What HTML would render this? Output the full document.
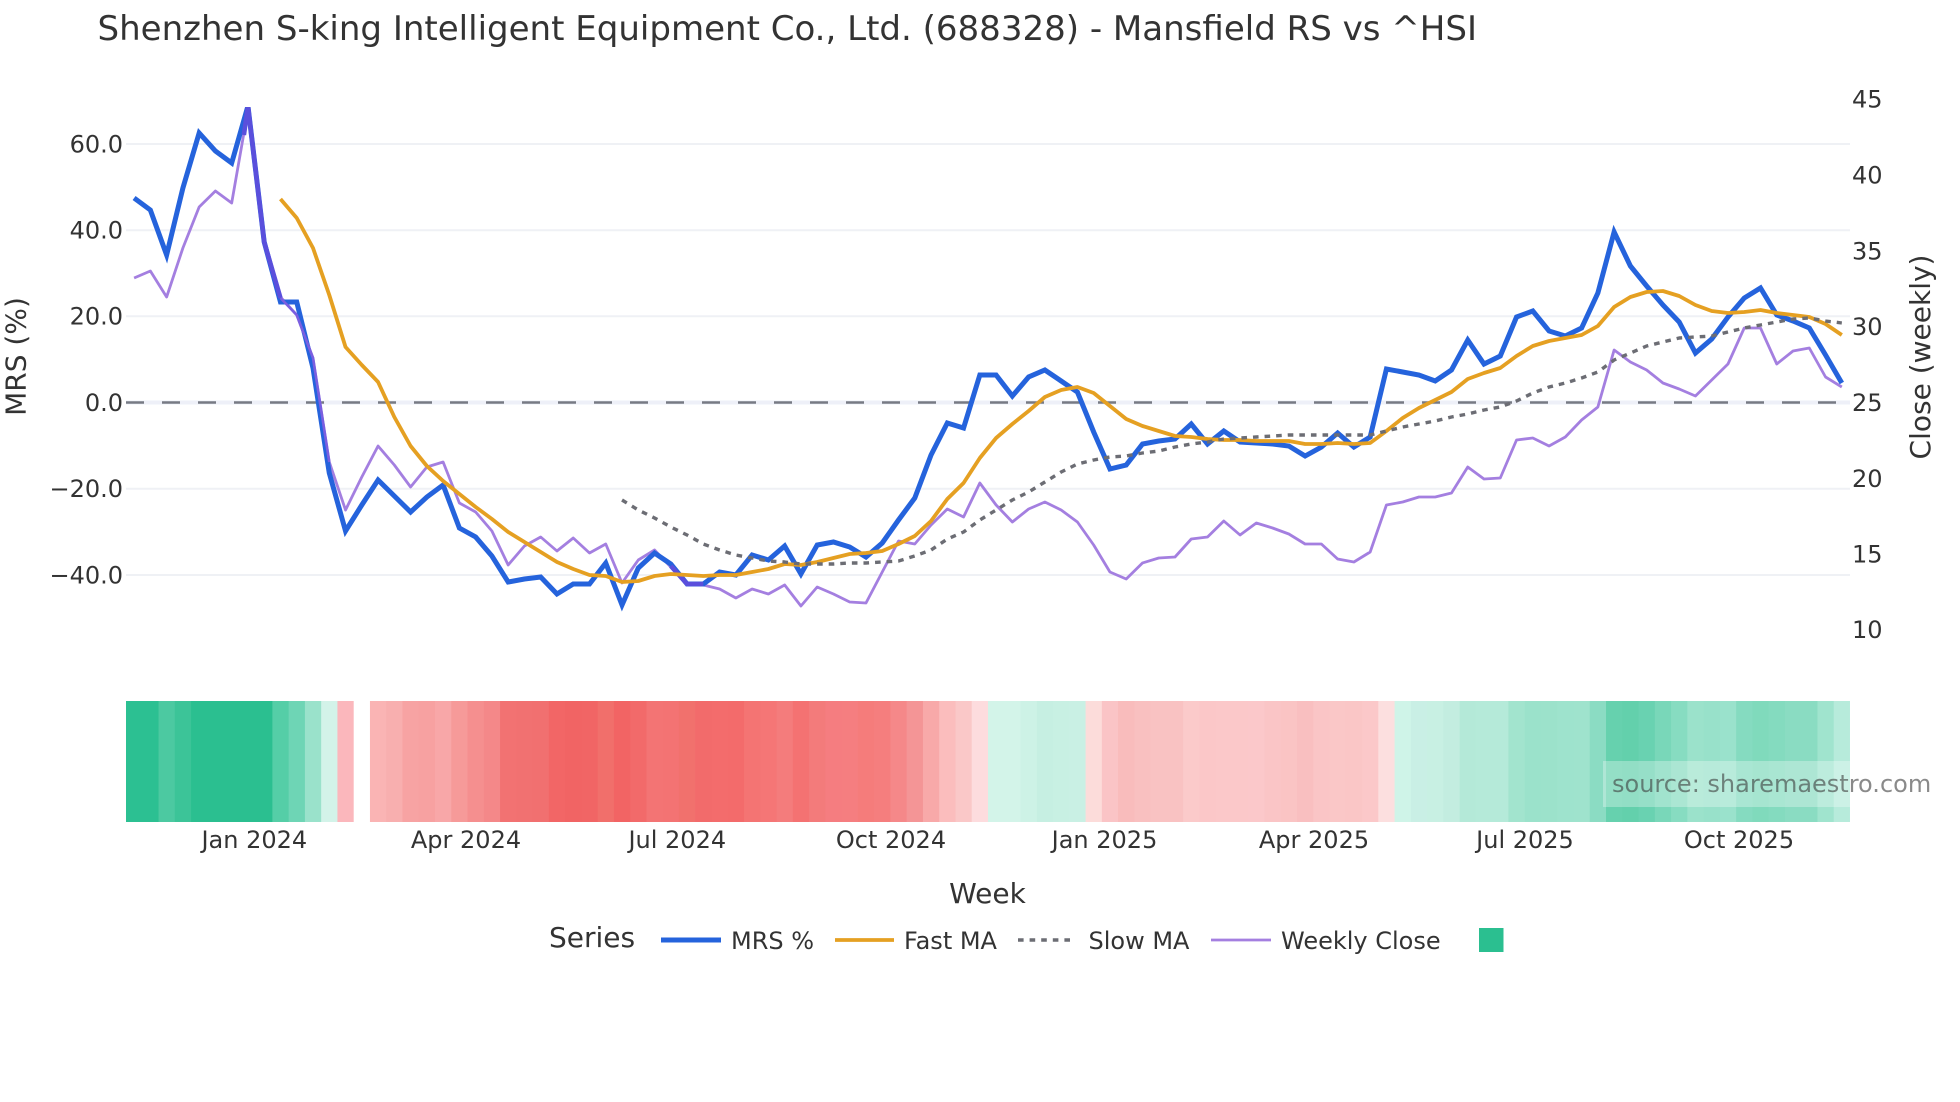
<!DOCTYPE html>
<html>
<head>
<meta charset="utf-8">
<title>Mansfield RS</title>
<style>
html,body{margin:0;padding:0;background:#fff;}
body{width:1960px;height:1102px;overflow:hidden;}
svg{display:block;}
text{font-family:"DejaVu Sans",sans-serif;fill:#333;}
.t{font-size:24px;}
.a{font-size:28px;}
.l{vector-effect:non-scaling-stroke;fill:none;}
</style>
</head>
<body>
<svg width="1960" height="1102" viewBox="0 0 1960 1102" xmlns="http://www.w3.org/2000/svg">
<defs><clipPath id="c"><rect x="126" y="107" width="1724" height="560"/></clipPath></defs>
<rect width="1960" height="1102" fill="#fff"/>

<text x="97.5" y="40" font-size="34.03" style="fill:#333">Shenzhen S-king Intelligent Equipment Co., Ltd. (688328) - Mansfield RS vs ^HSI</text>

<g stroke="#eff1f5" stroke-width="2">
<line x1="126" x2="1850" y1="144" y2="144"/>
<line x1="126" x2="1850" y1="230.2" y2="230.2"/>
<line x1="126" x2="1850" y1="316.3" y2="316.3"/>
<line x1="126" x2="1850" y1="488.7" y2="488.7"/>
<line x1="126" x2="1850" y1="575" y2="575"/>
</g>
<line x1="126" x2="1850" y1="402.5" y2="402.5" stroke="#eef0f8" stroke-width="4"/>
<line x1="126" x2="1850" y1="402.5" y2="402.5" stroke="#777a84" stroke-width="2.6" stroke-dasharray="18 18"/>

<g class="t" text-anchor="end">
<text x="123" y="152.5">60.0</text>
<text x="123" y="238.5">40.0</text>
<text x="123" y="324.5">20.0</text>
<text x="123" y="411">0.0</text>
<text x="123" y="497">−20.0</text>
<text x="123" y="583.5">−40.0</text>
</g>
<g class="t">
<text x="1852" y="107.7">45</text>
<text x="1852" y="183.6">40</text>
<text x="1852" y="259.5">35</text>
<text x="1852" y="335.2">30</text>
<text x="1852" y="411">25</text>
<text x="1852" y="486.8">20</text>
<text x="1852" y="562.6">15</text>
<text x="1852" y="638.2">10</text>
</g>
<text class="a" text-anchor="middle" transform="translate(25.5 356.5) rotate(-90)">MRS (%)</text>
<text class="a" text-anchor="middle" transform="translate(1930 357) rotate(-90)">Close (weekly)</text>

<g clip-path="url(#c)">
<g transform="translate(134.1 0) scale(16.264 1)">
<polyline class="l" stroke="#a47fe0" stroke-width="2.8" stroke-linejoin="round" points="0,278 1,271 2,297 3,248 4,207 5,191 6,203 7,110 8,242 9,297 10,315 11,358 12,462 13,510 14,477 15,446 16,465 17,487 18,467 19,462 20,503 21,512 22,531 23,565 24,546 25,537 26,551 27,538 28,553 29,544 30,583 31,560 32,550 33,567 34,585 35,585 36,589 37,598 38,589 39,594 40,585 41,606 42,587 43,594 44,602 45,603 46,572 47,541 48,544 49,525 50,509 51,517 52,483 53,505 54,522 55,509 56,502 57,510 58,522 59,545 60,572 61,579 62,563 63,558 64,557 65,539 66,537 67,521 68,535 69,523 70,528 71,534 72,544 73,544 74,559 75,562 76,552 77,505 78,502 79,497 80,497 81,493 82,467 83,479 84,478 85,440 86,438 87,446 88,437 89,420 90,407 91,350 92,362 93,370 94,383 95,389 96,396 97,380 98,364 99,328 100,328 101,364 102,351 103,348 104,377 105,387"/>
<polyline class="l" stroke="#2563dc" stroke-width="5" stroke-linejoin="miter" stroke-miterlimit="8" points="0,198 1,210 2,255 3,188 4,133 5,151 6,163 7,106 8,242 9,302 10,302 11,368 12,473 13,531 14,505 15,480 16,496 17,512 18,497 19,485 20,528 21,537 22,556 23,582 24,579 25,577 26,594 27,584 28,584 29,563 30,605 31,568 32,553 33,564 34,584 35,584 36,572 37,575 38,555 39,560 40,546 41,574 42,545 43,542 44,547 45,557 46,543 47,520 48,498 49,455 50,423 51,428 52,375 53,375 54,396 55,377 56,370 57,381 58,392 59,432 60,469 61,465 62,444 63,441 64,439 65,424 66,444 67,431 68,442 69,443 70,444 71,446 72,456 73,447 74,433 75,447 76,437 77,369 78,372 79,375 80,381 81,370 82,340 83,364 84,356 85,317 86,311 87,331 88,336 89,328 90,293 91,232 92,266 93,286 94,305 95,322 96,353 97,339 98,317 99,298 100,288 101,315 102,321 103,328 104,355 105,383"/>
<polyline class="l" stroke="#5a4fdc" stroke-width="4.6" stroke-linejoin="miter" points="6.75,135 7,106 8,242 9,298"/>
<polyline class="l" stroke="#7a5fe0" stroke-width="2.6" stroke-linejoin="round" points="9,298 10,315 11,358 12,462"/>
<polyline class="l" stroke="#5a4fdc" stroke-width="4.6" stroke-linejoin="round" points="33,566 34,584 35,584"/>
<polyline class="l" stroke="#e5a022" stroke-width="3.8" stroke-linejoin="round" points="9,199 10,218 11,248 12,295 13,347 14,365 15,382 16,417 17,446 18,466 19,481 20,494 21,507 22,519 23,532 24,542 25,552 26,562 27,569 28,575 29,576 30,582 31,581 32,576 33,574 34,575 35,576 36,575 37,575 38,572 39,569 40,564 41,565 42,562 43,558 44,554 45,553 46,551 47,544 48,536 49,521 50,499 51,483 52,458 53,438 54,424 55,411 56,397 57,390 58,387 59,393 60,406 61,419 62,426 63,431 64,436 65,437 66,439 67,440 68,440 69,441 70,441 71,441 72,444 73,444 74,443 75,444 76,443 77,431 78,418 79,408 80,400 81,392 82,379 83,373 84,368 85,356 86,346 87,341 88,338 89,335 90,326 91,307 92,297 93,292 94,291 95,296 96,305 97,311 98,313 99,312 100,310 101,313 102,315 103,317 104,324 105,335"/>
<polyline class="l" stroke="#6c6d74" stroke-width="3.4" stroke-dasharray="5.6 6" stroke-linejoin="round" points="30,500 31,510 32,518 33,527 34,535 35,544 36,550 37,555 38,558 39,561 40,562 41,564 42,564 43,564 44,563 45,563 46,562 47,561 48,556 49,550 50,539 51,532 52,520 53,510 54,500 55,492 56,482 57,472 58,464 59,460 60,457 61,456 62,453 63,451 64,447 65,444 66,442 67,439 68,438 69,437 70,436 71,435 72,435 73,435 74,435 75,435 76,435 77,431 78,427 79,424 80,421 81,417 82,414 83,410 84,407 85,401 86,393 87,387 88,383 89,378 90,372 91,360 92,353 93,346 94,342 95,338 96,337 97,336 98,332 99,328 100,325 101,322 102,319 103,318 104,321 105,323"/>
</g>
</g>

<g transform="translate(126 701) scale(16.264 121)">
<rect x="0" width="2.04" height="1" fill="#2cc092"/>
<rect x="2" width="1.04" height="1" fill="#4cc9a1"/>
<rect x="3" width="1.04" height="1" fill="#3cc498"/>
<rect x="4" width="5.04" height="1" fill="#2bbf90"/>
<rect x="9" width="1.04" height="1" fill="#55cea7"/>
<rect x="10" width="1.04" height="1" fill="#6ed5b5"/>
<rect x="11" width="1.04" height="1" fill="#9ae2cb"/>
<rect x="12" width="1.04" height="1" fill="#d3f3e9"/>
<rect x="13" width="1" height="1" fill="#fbb7bc"/>
<rect x="15" width="1.04" height="1" fill="#fab4b4"/>
<rect x="16" width="1.04" height="1" fill="#f8afaf"/>
<rect x="17" width="1.04" height="1" fill="#f7a3a3"/>
<rect x="18" width="1.04" height="1" fill="#f7a1a1"/>
<rect x="19" width="1.04" height="1" fill="#f8a7a8"/>
<rect x="20" width="1.04" height="1" fill="#f69a99"/>
<rect x="21" width="1.04" height="1" fill="#f58f8f"/>
<rect x="22" width="1.04" height="1" fill="#f48889"/>
<rect x="23" width="1.04" height="1" fill="#f27272"/>
<rect x="24" width="1.04" height="1" fill="#f17171"/>
<rect x="25" width="1.04" height="1" fill="#f17070"/>
<rect x="26" width="1.04" height="1" fill="#f26666"/>
<rect x="27" width="1.04" height="1" fill="#f16464"/>
<rect x="28" width="1.04" height="1" fill="#f16565"/>
<rect x="29" width="1.04" height="1" fill="#f16f6b"/>
<rect x="30" width="1.04" height="1" fill="#f26464"/>
<rect x="31" width="1.04" height="1" fill="#f26a6a"/>
<rect x="32" width="1.04" height="1" fill="#f37474"/>
<rect x="33" width="1.04" height="1" fill="#f37373"/>
<rect x="34" width="1.04" height="1" fill="#f1716d"/>
<rect x="35" width="1.04" height="1" fill="#f26b6b"/>
<rect x="36" width="1.04" height="1" fill="#f36c6c"/>
<rect x="37" width="1.04" height="1" fill="#f36b6b"/>
<rect x="38" width="1.04" height="1" fill="#f47473"/>
<rect x="39" width="1.04" height="1" fill="#f57676"/>
<rect x="40" width="1.04" height="1" fill="#f47c7c"/>
<rect x="41" width="1.04" height="1" fill="#f47272"/>
<rect x="42" width="1.04" height="1" fill="#f37b7b"/>
<rect x="43" width="1.04" height="1" fill="#f57d80"/>
<rect x="44" width="1.04" height="1" fill="#f57e80"/>
<rect x="45" width="1.04" height="1" fill="#f57c7b"/>
<rect x="46" width="1.04" height="1" fill="#f57e7e"/>
<rect x="47" width="1.04" height="1" fill="#f58889"/>
<rect x="48" width="1.04" height="1" fill="#f49596"/>
<rect x="49" width="1.04" height="1" fill="#f8a9a9"/>
<rect x="50" width="1.04" height="1" fill="#fbbdbd"/>
<rect x="51" width="1.04" height="1" fill="#fac8c8"/>
<rect x="52" width="1.04" height="1" fill="#fddcde"/>
<rect x="53" width="2.04" height="1" fill="#d3f4e9"/>
<rect x="55" width="1.04" height="1" fill="#cdf2e6"/>
<rect x="56" width="1.04" height="1" fill="#c6efe2"/>
<rect x="57" width="1.04" height="1" fill="#c8f0e3"/>
<rect x="58" width="1.04" height="1" fill="#c9f0e4"/>
<rect x="59" width="1.04" height="1" fill="#fcdcda"/>
<rect x="60" width="1.04" height="1" fill="#fac4c6"/>
<rect x="61" width="1.04" height="1" fill="#f9bcbc"/>
<rect x="62" width="1.04" height="1" fill="#f9c0c0"/>
<rect x="63" width="2.04" height="1" fill="#f9c2c2"/>
<rect x="65" width="1.04" height="1" fill="#fbcaca"/>
<rect x="66" width="1.04" height="1" fill="#fbc7c8"/>
<rect x="67" width="1.04" height="1" fill="#fbc8c9"/>
<rect x="68" width="1.04" height="1" fill="#fbc8c9"/>
<rect x="69" width="1.04" height="1" fill="#fbc8ca"/>
<rect x="70" width="1.04" height="1" fill="#fac5c6"/>
<rect x="71" width="1.04" height="1" fill="#fac4c4"/>
<rect x="72" width="1.04" height="1" fill="#f9bfc0"/>
<rect x="73" width="1.04" height="1" fill="#fac5c6"/>
<rect x="74" width="1.04" height="1" fill="#fac7c7"/>
<rect x="75" width="1.04" height="1" fill="#fac6c6"/>
<rect x="76" width="1.04" height="1" fill="#fbc8c9"/>
<rect x="77" width="1.04" height="1" fill="#fcdfdf"/>
<rect x="78" width="1.04" height="1" fill="#cff4e8"/>
<rect x="79" width="1.04" height="1" fill="#c9efe5"/>
<rect x="80" width="1.04" height="1" fill="#c8f0e3"/>
<rect x="81" width="1.04" height="1" fill="#c3ede0"/>
<rect x="82" width="1.04" height="1" fill="#b4e9d8"/>
<rect x="83" width="2.04" height="1" fill="#b5ead9"/>
<rect x="85" width="1.04" height="1" fill="#a2e4ce"/>
<rect x="86" width="1.04" height="1" fill="#9be2cb"/>
<rect x="87" width="1.04" height="1" fill="#9ce2cb"/>
<rect x="88" width="1.04" height="1" fill="#9ee3cd"/>
<rect x="89" width="1.04" height="1" fill="#9fe3cd"/>
<rect x="90" width="1.04" height="1" fill="#8bdcc3"/>
<rect x="91" width="1.04" height="1" fill="#66d1ae"/>
<rect x="92" width="1.04" height="1" fill="#63d0ac"/>
<rect x="93" width="1.04" height="1" fill="#69d2b1"/>
<rect x="94" width="1.04" height="1" fill="#79d7b9"/>
<rect x="95" width="1.04" height="1" fill="#87dcc1"/>
<rect x="96" width="1.04" height="1" fill="#9be2cb"/>
<rect x="97" width="1.04" height="1" fill="#98e1ca"/>
<rect x="98" width="1.04" height="1" fill="#9ae2cc"/>
<rect x="99" width="1.04" height="1" fill="#85dbc0"/>
<rect x="100" width="1.04" height="1" fill="#80dabc"/>
<rect x="101" width="1.04" height="1" fill="#84dbbf"/>
<rect x="102" width="2.04" height="1" fill="#8adcc2"/>
<rect x="104" width="1.04" height="1" fill="#a0e4ce"/>
<rect x="105" width="1" height="1" fill="#b7ebdb"/>
</g>

<rect x="1603" y="761" width="335" height="46" fill="#fff" fill-opacity="0.3"/>
<text x="1612" y="792" font-size="24" style="fill:rgb(60,60,60);fill-opacity:.6">source: sharemaestro.com</text>

<g class="t" text-anchor="middle">
<text x="254.300" y="848">Jan 2024</text>
<text x="466" y="848">Apr 2024</text>
<text x="677.300" y="848">Jul 2024</text>
<text x="891" y="848">Oct 2024</text>
<text x="1104.500" y="848">Jan 2025</text>
<text x="1314" y="848">Apr 2025</text>
<text x="1525" y="848">Jul 2025</text>
<text x="1739" y="848">Oct 2025</text>
</g>
<text class="a" x="987.5" y="903" text-anchor="middle">Week</text>

<text class="a" x="549" y="947">Series</text>
<line x1="661" x2="721" y1="940" y2="940" stroke="#2563dc" stroke-width="5"/>
<text class="t" x="731" y="949">MRS %</text>
<line x1="835" x2="894" y1="940" y2="940" stroke="#e5a022" stroke-width="3.8"/>
<text class="t" x="904" y="949">Fast MA</text>
<line x1="1018" x2="1075" y1="940" y2="940" stroke="#6c6d74" stroke-width="3.4" stroke-dasharray="5.6 6"/>
<text class="t" x="1088.500" y="949">Slow MA</text>
<line x1="1211" x2="1271" y1="940" y2="940" stroke="#a47fe0" stroke-width="2.8"/>
<text class="t" x="1281" y="949">Weekly Close</text>
<rect x="1479" y="928" width="24.500" height="24" fill="#2bbf90"/>
</svg>
</body>
</html>
